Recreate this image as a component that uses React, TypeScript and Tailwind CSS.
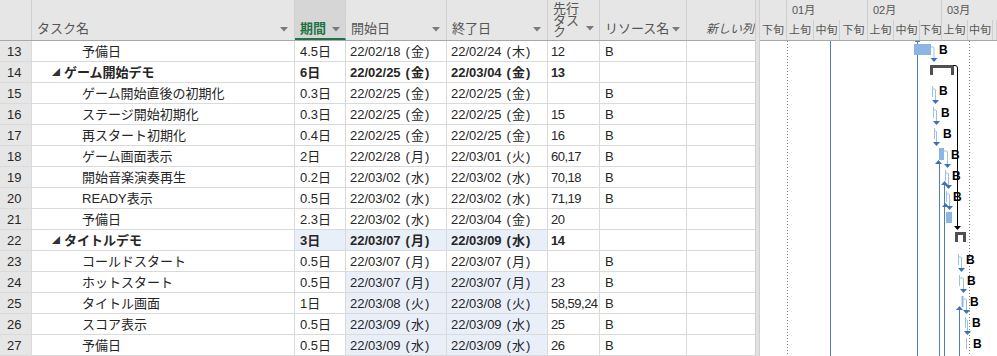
import React from 'react'

type Row = {
  n: number
  name: string
  dur: string
  start: string
  end: string
  pred: string
  res: string
  summary?: boolean
  hiDur?: boolean
  hiDates?: boolean
}

const rows: Row[] = [
  { n: 13, name: '予備日', dur: '4.5日', start: '22/02/18 (金)', end: '22/02/24 (木)', pred: '12', res: 'B' },
  { n: 14, name: 'ゲーム開始デモ', dur: '6日', start: '22/02/25 (金)', end: '22/03/04 (金)', pred: '13', res: '', summary: true },
  { n: 15, name: 'ゲーム開始直後の初期化', dur: '0.3日', start: '22/02/25 (金)', end: '22/02/25 (金)', pred: '', res: 'B' },
  { n: 16, name: 'ステージ開始初期化', dur: '0.3日', start: '22/02/25 (金)', end: '22/02/25 (金)', pred: '15', res: 'B' },
  { n: 17, name: '再スタート初期化', dur: '0.4日', start: '22/02/25 (金)', end: '22/02/25 (金)', pred: '16', res: 'B' },
  { n: 18, name: 'ゲーム画面表示', dur: '2日', start: '22/02/28 (月)', end: '22/03/01 (火)', pred: '60,17', res: 'B' },
  { n: 19, name: '開始音楽演奏再生', dur: '0.2日', start: '22/03/02 (水)', end: '22/03/02 (水)', pred: '70,18', res: 'B' },
  { n: 20, name: 'READY表示', dur: '0.5日', start: '22/03/02 (水)', end: '22/03/02 (水)', pred: '71,19', res: 'B' },
  { n: 21, name: '予備日', dur: '2.3日', start: '22/03/02 (水)', end: '22/03/04 (金)', pred: '20', res: '' },
  { n: 22, name: 'タイトルデモ', dur: '3日', start: '22/03/07 (月)', end: '22/03/09 (水)', pred: '14', res: '', summary: true, hiDur: true, hiDates: true },
  { n: 23, name: 'コールドスタート', dur: '0.5日', start: '22/03/07 (月)', end: '22/03/07 (月)', pred: '', res: 'B' },
  { n: 24, name: 'ホットスタート', dur: '0.5日', start: '22/03/07 (月)', end: '22/03/07 (月)', pred: '23', res: 'B', hiDates: true },
  { n: 25, name: 'タイトル画面', dur: '1日', start: '22/03/08 (火)', end: '22/03/08 (火)', pred: '58,59,24', res: 'B', hiDates: true },
  { n: 26, name: 'スコア表示', dur: '0.5日', start: '22/03/09 (水)', end: '22/03/09 (水)', pred: '25', res: 'B', hiDates: true },
  { n: 27, name: '予備日', dur: '0.5日', start: '22/03/09 (水)', end: '22/03/09 (水)', pred: '26', res: 'B', hiDates: true }
]

const font = { fontFamily: '"Liberation Sans", "Noto Sans CJK JP", sans-serif' }

const Caret = ({ className = '' }: { className?: string }) => (
  <svg width="8" height="5" viewBox="0 0 8 5" className={`mb-[5px] shrink-0 ${className}`}>
    <path d="M0 0 H8 L4 4.5 Z" fill="#7a7a7a" />
  </svg>
)

// "22/02/18 (金)" -> date part plus a slightly looser weekday part
const DateText = ({ v }: { v: string }) => {
  const [d, w] = v.split(' ')
  return (
    <>
      {d}
      <span className="ml-[5px]">
        (<span className="mx-[1px]">{w.slice(1, -1)}</span>)
      </span>
    </>
  )
}

const cell = 'h-[21px] border-r border-b border-[#dadada] text-[13px] leading-[21px] whitespace-nowrap overflow-hidden text-[#262626]'

const LINK = '#3d70b4'
const THIN = '#9cc0e8'

// link from a task to the next one: right, then down, with arrowhead
const Link = ({ x, y, tx, ty }: { x: number; y: number; tx: number; ty: number }) => (
  <g>
    <path d={`M${x} ${y} H${tx - 1} Q${tx} ${y} ${tx} ${y + 1} V${ty - 3}`} stroke={THIN} strokeWidth="1" fill="none" />
    <polygon points={`${tx - 3.5},${ty - 4} ${tx + 3.5},${ty - 4} ${tx},${ty}`} fill={LINK} />
  </g>
)

const UpArrow = ({ x, y }: { x: number; y: number }) => (
  <polygon points={`${x - 3.5},${y + 4} ${x + 3.5},${y + 4} ${x},${y}`} fill={LINK} />
)

const B = ({ x, y }: { x: number; y: number }) => (
  <text x={x} y={y} fontSize="12" fontWeight="700" fill="#000" fontFamily="Liberation Sans, sans-serif">
    B
  </text>
)

const GanttBody = () => (
  <svg width="237" height="315" viewBox="0 0 237 315" className="block">
    <line x1="27.5" y1="0" x2="27.5" y2="315" stroke="#7f7f7f" strokeDasharray="1 2" />
    <line x1="209.5" y1="0" x2="209.5" y2="315" stroke="#7f7f7f" strokeDasharray="1 2" />
    <line x1="70.5" y1="0" x2="70.5" y2="315" stroke="#4f7db5" />
    <line x1="157.5" y1="0" x2="157.5" y2="315" stroke="#4f7db5" />
    <line x1="155" y1="0.5" x2="160" y2="0.5" stroke="#4f7db5" />

    {/* long predecessor lines coming up from below */}
    <line x1="179.5" y1="123" x2="179.5" y2="315" stroke="#4f7db5" />
    <line x1="184.5" y1="144" x2="184.5" y2="315" stroke="#4f7db5" />
    <line x1="199.5" y1="269" x2="199.5" y2="315" stroke="#4f7db5" />
    <UpArrow x={178.5} y={119} />
    <UpArrow x={184.5} y={140} />
    <UpArrow x={185.5} y={162} />
    <UpArrow x={199.5} y={265} />

    {/* row 13 */}
    <rect x="154" y="3" width="17" height="11" fill="#8cb4e4" />
    <Link x={171} y={6} tx={174} ty={21} />
    <B x={179} y={13} />

    {/* row 14 summary */}
    <rect x="170" y="24" width="24" height="3" fill="#505050" />
    <rect x="170" y="24" width="3" height="10" fill="#505050" />
    <rect x="191" y="24" width="3" height="10" fill="#505050" />
    <path d="M193 24.5 H195 Q197.5 24.5 197.5 27 V185" stroke="#000" strokeWidth="1" fill="none" />
    <polygon points="194,185 201,185 197.5,189" fill="#000" />

    {/* rows 15-17 */}
    <line x1="172.5" y1="45" x2="172.5" y2="56" stroke={THIN} />
    <Link x={172.5} y={48} tx={175.5} ty={63} />
    <B x={179} y={54} />
    <line x1="173.5" y1="66" x2="173.5" y2="77" stroke={THIN} />
    <Link x={173.5} y={69} tx={176.5} ty={84} />
    <B x={181} y={76} />
    <line x1="174.5" y1="87" x2="174.5" y2="98" stroke={THIN} />
    <Link x={174.5} y={90} tx={176.5} ty={105} />
    <B x={183} y={97} />

    {/* row 18 */}
    <rect x="179" y="107" width="5" height="12" fill="#8cb4e4" />
    <Link x={184} y={110} tx={187.5} ty={127} />
    <B x={191} y={118} />

    {/* row 19 */}
    <line x1="185.5" y1="129" x2="185.5" y2="140" stroke={THIN} />
    <Link x={185.5} y={132} tx={188.5} ty={148} />
    <B x={192} y={139} />

    {/* row 20 */}
    <line x1="186.5" y1="150" x2="186.5" y2="161" stroke={THIN} />
    <Link x={186.5} y={153} tx={189.5} ty={169} />
    <B x={193} y={160} />

    {/* row 21 */}
    <rect x="186" y="171" width="6" height="11" fill="#8cb4e4" />

    {/* row 22 summary */}
    <rect x="195" y="191" width="11" height="3" fill="#505050" />
    <rect x="195" y="191" width="3" height="10" fill="#505050" />
    <rect x="203" y="191" width="3" height="10" fill="#505050" />

    {/* rows 23-27 */}
    <line x1="198.5" y1="213" x2="198.5" y2="224" stroke={THIN} />
    <Link x={198.5} y={216} tx={201.5} ty={231} />
    <B x={206} y={223} />
    <line x1="199.5" y1="234" x2="199.5" y2="245" stroke={THIN} />
    <Link x={199.5} y={237} tx={203.5} ty={252} />
    <B x={207} y={244} />
    <line x1="202.5" y1="255" x2="202.5" y2="266" stroke="#8cb4e4" strokeWidth="2" />
    <Link x={203.5} y={258} tx={206.5} ty={273} />
    <B x={210} y={265} />
    <line x1="205.5" y1="276" x2="205.5" y2="287" stroke={THIN} />
    <Link x={205.5} y={279} tx={207.5} ty={294} />
    <B x={212} y={286} />
    <line x1="206.5" y1="297" x2="206.5" y2="308" stroke={THIN} />
    <B x={213} y={307} />
  </svg>
)

const GanttHeader = () => (
  <div className="h-[41px] bg-[#e6e6e6] border-b border-[#a8a8a8] text-[11px] text-[#555] flex flex-col">
    <div className="h-[20px] grid grid-cols-[27px_81px_74px_1fr]">
      <div className="border-r border-[#cfcfcf]" />
      <div className="border-r border-[#cfcfcf] pl-[5px] leading-[20px]">01月</div>
      <div className="border-r border-[#cfcfcf] pl-[5px] leading-[20px]">02月</div>
      <div className="pl-[5px] leading-[20px]">03月</div>
    </div>
    <div className="flex-1 grid grid-cols-[27px_27px_26px_28px_26px_26px_22px_26px_25px_1fr] leading-[20px]">
      {['下旬', '上旬', '中旬', '下旬', '上旬', '中旬', '下旬', '上旬', '中旬', ''].map((t, i) => (
        <div key={i} className="border-r border-[#cfcfcf] text-center overflow-hidden whitespace-nowrap">
          {t}
        </div>
      ))}
    </div>
  </div>
)

const cols = 'grid grid-cols-[32px_263px_51px_101px_101px_52px_87px_68px]'

export default function App() {
  return (
    <div className="w-[997px] h-[356px] overflow-hidden bg-white flex" style={font}>
      <div className="w-[755px] shrink-0">
        {/* header */}
        <div className={`${cols} h-[41px] bg-[#e6e6e6] border-b border-[#a8a8a8] text-[13px] text-[#555]`}>
          <div className="border-r border-[#d0d0d0]" />
          <div className="border-r border-[#d0d0d0] flex items-end justify-between pl-[5px] pr-[6px] pb-[3px]">
            <span className="leading-[16px]">タスク名</span>
            <Caret />
          </div>
          <div className="border-r border-[#d0d0d0] bg-[#d6d6d6] border-b-2 border-b-[#217346] flex items-end justify-between pl-[5px] pr-[5px] pb-[1px]">
            <span className="leading-[16px] font-bold text-[#217346]">期間</span>
            <Caret className="mb-[3px]" />
          </div>
          <div className="border-r border-[#d0d0d0] flex items-end justify-between pl-[5px] pr-[6px] pb-[3px]">
            <span className="leading-[16px]">開始日</span>
            <Caret />
          </div>
          <div className="border-r border-[#d0d0d0] flex items-end justify-between pl-[5px] pr-[6px] pb-[3px]">
            <span className="leading-[16px]">終了日</span>
            <Caret />
          </div>
          <div className="border-r border-[#d0d0d0] flex items-start justify-between pl-[5px] pr-[5px] pt-[3px]">
            <span className="w-[27px] leading-[11.5px] break-all">先行タスク</span>
            <Caret className="mt-[23px]" />
          </div>
          <div className="border-r border-[#d0d0d0] flex items-end justify-between pl-[5px] pr-[6px] pb-[3px]">
            <span className="leading-[16px]">リソース名</span>
            <Caret />
          </div>
          <div className="flex items-end justify-end pr-[1px] pb-[3px] overflow-hidden whitespace-nowrap">
            <span className="leading-[16px] italic text-[12px]">新しい列</span>
          </div>
        </div>

        {/* rows */}
        {rows.map((r) => (
          <div key={r.n} className={cols}>
            <div className={`${cell} bg-[#e6e6e6] text-[11px] text-[#666] pl-[7px] leading-[18px] border-[#d0d0d0]`}>{r.n}</div>
            <div className={`${cell} ${r.summary ? 'pl-[20px] font-bold' : 'pl-[50px]'}`}>
              {r.summary && <span className="inline-block w-[12px] text-[8px] align-top text-[#333]">◢</span>}
              {r.name}
            </div>
            <div className={`${cell} pl-[5px] ${r.summary ? 'font-bold' : ''} ${r.hiDur ? 'bg-[#e9eff9]' : ''}`}>{r.dur}</div>
            <div className={`${cell} pl-[4px] ${r.summary ? 'font-bold' : ''} ${r.hiDates ? 'bg-[#e9eff9]' : ''}`}>
              <DateText v={r.start} />
            </div>
            <div className={`${cell} pl-[4px] ${r.summary ? 'font-bold' : ''} ${r.hiDates ? 'bg-[#e9eff9]' : ''}`}>
              <DateText v={r.end} />
            </div>
            <div className={`${cell} pl-[3px] tracking-[-0.5px] ${r.summary ? 'font-bold' : ''}`}>{r.pred}</div>
            <div className={`${cell} pl-[5px]`}>{r.res}</div>
            <div className={`${cell} border-r-0`} />
          </div>
        ))}
      </div>

      {/* splitter */}
      <div className="w-[5px] shrink-0 bg-[#e2e2e2] border-l border-[#b8b8b8] border-r border-[#cfcfcf]" />

      {/* gantt */}
      <div className="flex-1 flex flex-col min-w-0">
        <GanttHeader />
        <GanttBody />
      </div>
    </div>
  )
}
